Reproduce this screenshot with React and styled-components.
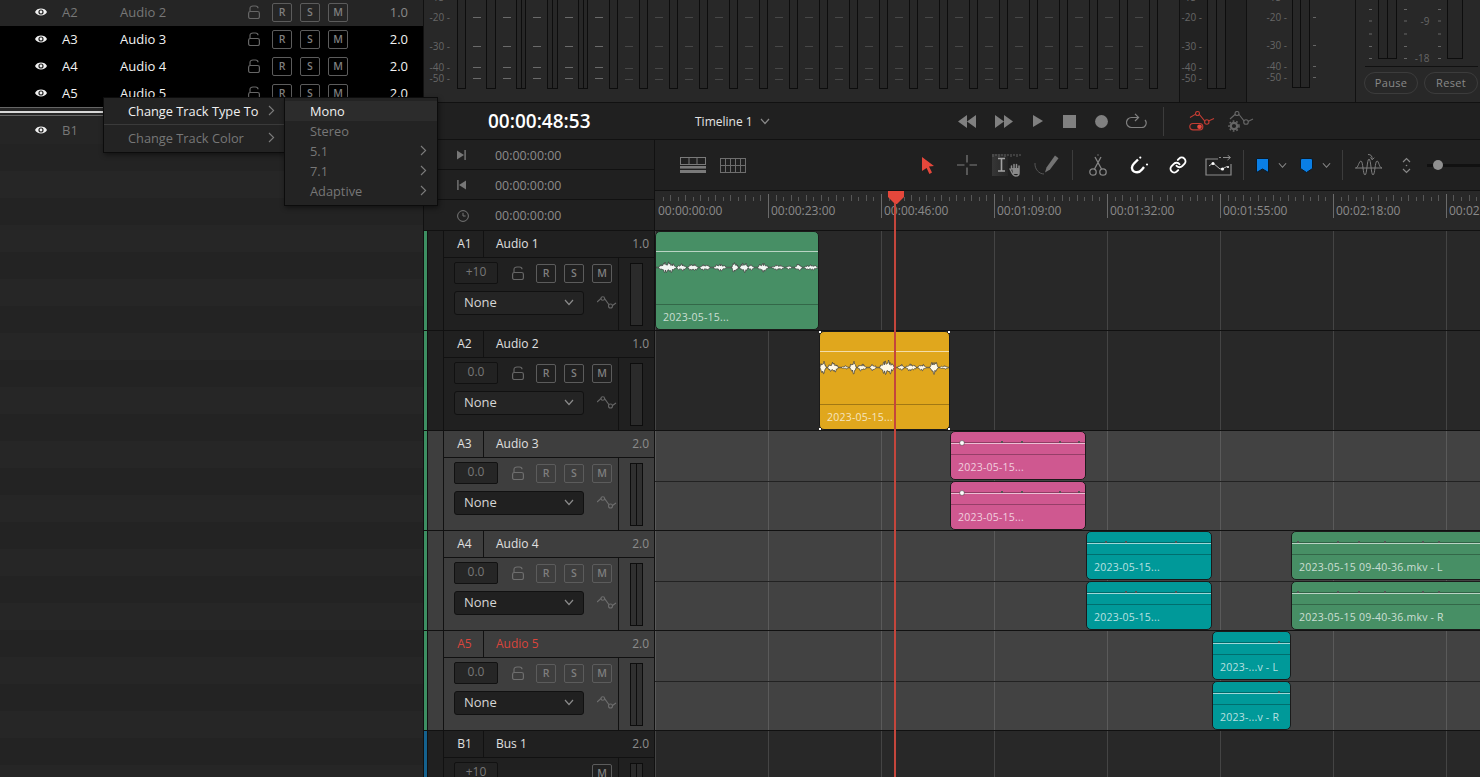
import React from "react";
import styled, { createGlobalStyle } from "styled-components";
import { Link } from "lucide-react";

const Global = createGlobalStyle`
  html, body { margin: 0; padding: 0; background: #222; }
  * { box-sizing: border-box; }
  body { font-family: "Open Sans", "Liberation Sans", sans-serif; }
`;

const Root = styled.div`
  position: relative; width: 1480px; height: 777px; overflow: hidden;
  display: flex; background: #222; color: #888;
  font-family: "Open Sans", "Liberation Sans", sans-serif;
`;

/* ---------- left track index ---------- */
const IndexPanel = styled.div`
  width: 424px; flex: none; height: 777px; overflow: hidden;
  border-right: 1px solid #111; background: #232323;
  display: flex; flex-direction: column;
`;
const IndexRow = styled.div`
  height: 27px; flex: none; display: flex; align-items: center; padding: 0 0 1px 35px;
  background: ${(p) => (p.$on ? "#000" : "#252525")};
  color: ${(p) => (p.$on ? "#f2f2f2" : "#777")};
  font-size: 13px;
  &:first-child { margin-top: -1px; }
`;
const IndexEye = styled.span`width: 27px; flex: none; display: flex;`;
const IndexId = styled.span`width: 58px; flex: none;`;
const IndexName = styled.span`width: 128px; flex: none;`;
const IndexVal = styled.span`width: 60px; text-align: right; color: ${(p) => (p.$on ? "#f2f2f2" : "#888")};`;
const LetterGroup = styled.span`display: flex; gap: 8px; margin-left: 12px;`;
const Divider = styled.div`
  height: 9px; flex: none; margin-bottom: 1px; background: #262626;
  border-top: 1px solid #666; border-bottom: 1px solid #666; display: flex; align-items: center;
  &::after { content: ""; display: block; width: 100%; height: 2px; background: #d8d8d8; }
`;
const EmptyRow = styled.div`
  height: 27px; flex: none; background: ${(p) => (p.$alt ? "#232323" : "#262626")};
`;

/* ---------- right column ---------- */
const Main = styled.div`flex: 1; min-width: 0; display: flex; flex-direction: column;`;

const Meters = styled.div`
  height: 103px; flex: none; display: flex; background: #282828; border-bottom: 1px solid #111; overflow: hidden;
`;
const MeterSection = styled.div`
  flex: none; display: flex; width: ${(p) => p.$w}px; height: 102px;
  background: ${(p) => p.$bg || "#282828"};
  border-right: ${(p) => (p.$last ? "none" : "1px solid #111")};
`;
const ScaleColumn = styled.div`
  flex: none; width: ${(p) => p.$w}px; margin-right: ${(p) => p.$mr}px;
  display: flex; flex-direction: column; align-items: flex-end;
`;
const ScaleLabel = styled.div`
  height: 10px; line-height: 10px; font-size: 10px; color: #666; white-space: pre; flex: none;
  margin-top: ${(p) => p.$gap}px;
`;
const Strip = styled.div`flex: none; width: ${(p) => p.$w}px; display: flex;`;
const Bar = styled.div`
  flex: none; width: ${(p) => p.$w}px; height: ${(p) => p.$h}px; background: #272727;
  border: 1px solid #0d0d0d; border-top: none; display: flex;
`;
const BarSplit = styled.div`flex: 1; & + & { border-left: 1px solid #0d0d0d; }`;
const Ticks = styled.svg`flex: none; display: block;`;

const LoudnessColumn = styled.div`flex: 1; display: flex; flex-direction: column;`;
const LoudnessRow = styled.div`
  height: 67px; margin-left: 9px; width: 113px; padding-left: 4px; flex: none;
  border-bottom: 1px solid #111; display: flex; overflow: hidden;
`;
const DotColumn = styled.svg`flex: none; display: block; margin-left: ${(p) => p.$ml}px;`;
const LoudLabels = styled.div`
  flex: none; width: 20px; margin-left: 3px; display: flex; flex-direction: column; align-items: flex-end;
`;
const BarSlot = styled.div`flex: none; margin-left: ${(p) => p.$ml}px;`;
const PillRow = styled.div`display: flex; gap: 6px; padding: 5px 0 0 8px;`;
const Pill = styled.div`
  width: 54px; height: 22px; border: 1px solid #3c3c3c; border-radius: 11px;
  font-size: 11px; line-height: 20px; text-align: center; color: #888; letter-spacing: .3px;
`;

/* transport */
const Transport = styled.div`
  height: 37px; flex: none; display: flex; align-items: center; padding-left: 64px;
  background: #202020; border-bottom: 1px solid #111;
`;
const MainTime = styled.div`
  width: 207px; flex: none; font-size: 19px; font-weight: 600; color: #fff;
`;
const TimelineName = styled.div`
  width: 263px; flex: none; display: flex; align-items: center; gap: 7px; font-size: 12px; color: #e4e4e4;
`;
const Slot = styled.div`
  flex: none; display: flex; align-items: center; margin-left: ${(p) => p.$ml || 0}px;
  & > svg { display: block; }
`;
const VSep = styled.div`
  flex: none; width: 1px; height: ${(p) => p.$h || 30}px; background: #3c3c3c; margin-left: ${(p) => p.$ml}px;
`;

/* header */
const TimelineHead = styled.div`height: 91px; flex: none; display: flex;`;
const CodeColumn = styled.div`
  width: 231px; flex: none; display: flex; flex-direction: column; background: #202020;
  border-right: 1px solid #111;
`;
const CodeRow = styled.div`
  height: 30px; flex: none; display: flex; align-items: center; padding: 1px 0 0 33px; border-bottom: 1px solid #111;
  font-size: 12.4px; color: #8c8c8c;
  &:last-child { height: 31px; }
`;
const CodeIcon = styled.span`width: 38px; flex: none; display: flex;`;
const HeadRight = styled.div`flex: 1; min-width: 0; display: flex; flex-direction: column;`;
const Toolbar = styled.div`
  height: 51px; flex: none; display: flex; align-items: center; background: #202020; border-bottom: 1px solid #111;
`;
const SliderTrack = styled.div`
  flex: 1; height: 3px; margin-left: 16px; background: #111; position: relative;
`;
const SliderKnob = styled.div`
  position: absolute; left: 6px; top: -4px; width: 10px; height: 10px; border-radius: 50%; background: #8f8f8f;
`;
const Ruler = styled.div`
  height: 40px; flex: none; position: relative; display: flex; overflow: hidden;
  background: #282828; border-bottom: 1px solid #111;
`;
const RulerTicks = styled.svg`position: absolute; left: 0; top: 0; display: block;`;
const RulerLabel = styled.div`
  flex: none; width: 113px; padding: 13px 0 0 3px; font-size: 12px; line-height: 14px; color: #8a8a8a; white-space: nowrap;
`;

/* tracks */
const Tracks = styled.div`flex: 1; display: flex; flex-direction: column; overflow: hidden;`;
const Track = styled.div`height: 100px; flex: none; display: flex; border-bottom: 1px solid #111;`;
const TrackHead = styled.div`
  width: 231px; flex: none; display: flex; border-right: 1px solid #111;
  background: ${(p) => (p.$on ? "#3e3e3e" : "#202020")};
`;
const Stripe = styled.div`width: 4px; flex: none; background: ${(p) => p.$c}; border-right: 1px solid #111;`;
const Gutter = styled.div`width: 16px; flex: none; border-right: 1px solid #111;`;
const TrackMain = styled.div`flex: 1; min-width: 0; display: flex; flex-direction: column;`;
const NameRow = styled.div`
  height: 27px; flex: none; display: flex; align-items: center; border-bottom: 1px solid #111; font-size: 12px;
  color: ${(p) => (p.$armed ? "#d9453c" : "#e0e0e0")};
`;
const TrackId = styled.div`
  width: 40px; flex: none; height: 100%; display: flex; align-items: center; justify-content: center;
  padding: 0 0 1px 2px; border-right: 1px solid #111;
`;
const TrackName = styled.div`flex: 1; padding: 0 0 1px 12px;`;
const TrackGain = styled.div`padding: 0 5px 1px 0; color: #8c8c8c;`;
const Body = styled.div`flex: 1; display: flex; min-height: 0;`;
const Controls = styled.div`
  width: 174px; flex: none; padding: 4px 0 0 10px; display: flex; flex-direction: column; gap: 7px;
`;
const ControlRow = styled.div`display: flex; align-items: center;`;
const GainBox = styled.div`
  width: 44px; height: 22px; flex: none; border: 1px solid #111; border-radius: 2px;
  background: ${(p) => (p.$on ? "#262626" : "#222")};
  font-size: 12px; line-height: 18px; text-align: center; color: #777;
`;
const LockSlot = styled.div`flex: none; margin-left: 14px; display: flex;`;
const Letters = styled.div`display: flex; gap: 8px; margin-left: ${(p) => p.$ml ?? 12}px;`;
const Letter = styled.div`
  width: 20px; height: 19px; flex: none; border: 1px solid #5c5c5c; border-radius: 2px;
  font-size: 10.5px; font-weight: 600; line-height: 17px; text-align: center; color: #7f7f7f;
`;
const Dropdown = styled.div`
  width: 130px; height: 24px; flex: none; display: flex; align-items: center; justify-content: space-between;
  padding: 0 9px 2px 9px; border: 1px solid #111; border-radius: 3px;
  background: ${(p) => (p.$on ? "#202020" : "#242424")};
  font-size: 13px; color: #d6d6d6;
`;
const AutoSlot = styled.div`flex: none; margin-left: 13px; display: flex;`;
const MeterCol = styled.div`
  flex: 1; border-left: 1px solid #111; padding: 5px 0 0 11px;
`;
const TrackMeter = styled.div`
  width: 13px; height: 63px; border: 1px solid #0d0d0d; background: ${(p) => (p.$on ? "#303030" : "#2b2b2b")}; display: flex;
`;

const Lane = styled.div`
  flex: 1; min-width: 0; position: relative;
  background-color: ${(p) => (p.$on ? "#424242" : "#282828")};
  background-image: linear-gradient(90deg, ${(p) => (p.$on ? "#5a5a5a" : "#444")} 0 1px, transparent 1px);
  background-size: 113px 100%;
`;
const LaneMid = styled.div`position: absolute; left: 0; right: 0; top: 50px; height: 1px; background: #222;`;
const Clip = styled.div`
  position: absolute; left: ${(p) => p.$x}px; width: ${(p) => p.$w}px; top: ${(p) => p.$y}px; height: ${(p) => p.$h}px;
  background: ${(p) => p.$c}; border: 1px solid #1b1b1b; border-radius: 5px;
  display: flex; flex-direction: column;
`;
const ClipTop = styled.div`
  flex: none; height: ${(p) => p.$h}px; border-bottom: 1px solid rgba(255,255,255,.62);
`;
const ClipWave = styled.div`flex: 1; min-height: 0;`;
const WaveSvg = styled.svg`display: block; position: absolute; left: 0; top: ${(p) => p.$y}px;`;
const ClipLabel = styled.div`
  flex: none; height: 25px; border-top: 1px solid rgba(0,0,0,.28); padding: 5px 0 0 7px;
  font-size: 10.5px; line-height: 14px; letter-spacing: .22px; color: rgba(255,255,255,.72); white-space: nowrap; overflow: hidden;
`;
const Handle = styled.span`
  position: absolute; width: 2px; height: 2px; background: #fff;
  ${(p) => (p.$r ? "right: -1px;" : "left: -1px;")}
  ${(p) => (p.$b ? "bottom: -1px;" : "top: -1px;")}
`;

/* playhead + menus */
const Playhead = styled.div`
  position: absolute; left: 894px; top: 203px; bottom: 0; width: 2px; background: #c4463c; z-index: 5;
`;
const PlayheadCap = styled.svg`position: absolute; left: 888px; top: 191px; z-index: 5; display: block;`;
const Menu = styled.div`
  position: absolute; left: ${(p) => p.$x}px; top: 97px; width: ${(p) => p.$w}px; height: ${(p) => p.$h}px;
  padding: 3px 0 0; background: #232323; border: 1px solid #0c0c0c; z-index: 10;
  box-shadow: 1px 2px 5px rgba(0,0,0,.45);
`;
const MenuItem = styled.div`
  height: 20px; display: flex; align-items: center; justify-content: space-between;
  padding: 0 ${(p) => p.$pr}px 1px ${(p) => p.$pl}px; font-size: 12.8px;
  color: ${(p) => (p.$lit ? "#f0f0f0" : "#777")};
  background: ${(p) => (p.$hi ? "#2c2c2c" : "transparent")};
  & > svg { flex: none; display: block; }
`;
const MenuSep = styled.div`height: 1px; background: #3a3a3a; margin: 3px 0 3px;`;

/* ---------- icons ---------- */
const Eye = () => (
  <svg width="12" height="10" viewBox="0 0 12 10">
    <path d="M0 5C2 .4 10 .4 12 5 10 9.6 2 9.6 0 5Z" fill="#f0f0f0" />
    <circle cx="6" cy="5" r="2.6" fill="#222" />
    <circle cx="6" cy="5" r="1.4" fill="#f0f0f0" />
  </svg>
);
const Lock = ({ c = "#666" }) => (
  <svg width="12" height="14" viewBox="0 0 12 14" fill="none" stroke={c} strokeWidth="1.2">
    <rect x=".6" y="6.5" width="10.8" height="7" rx="1.8" />
    <path d="M2 6.5V3.5C2 1.8 3.3 1 5 1H7.5C9.2 1 10 1.8 10 3.2" />
  </svg>
);
const Auto = ({ c = "#666" }) => (
  <svg width="20" height="15" viewBox="0 0 20 15" fill="none" stroke={c} strokeWidth="1.1">
    <path d="M0 6L4 2.5M7.6 2.6L12 8.7M15.5 9.5L19 7" />
    <circle cx="5.8" cy="2.5" r="1.8" />
    <circle cx="13.5" cy="10" r="2" />
  </svg>
);
const ChevronDown = ({ c = "#8a8a8a", w = 10 }) => (
  <svg width={w} height="7" viewBox="0 0 10 7" fill="none" stroke={c} strokeWidth="1.2">
    <path d="M1 1l4 4.5L9 1" />
  </svg>
);
const ChevronRight = () => (
  <svg width="7" height="11" viewBox="0 0 7 11" fill="none" stroke="#7c7c7c" strokeWidth="1.1">
    <path d="M1 1l4.6 4.5L1 10" />
  </svg>
);
const GoEnd = () => (
  <svg width="9" height="10" viewBox="0 0 9 10" fill="#777"><path d="M0 .5L7 5 0 9.5Z" /><rect x="7.4" y="0" width="1.4" height="10" /></svg>
);
const GoStart = () => (
  <svg width="9" height="10" viewBox="0 0 9 10" fill="#777"><path d="M9 .5L2 5l7 4.5Z" /><rect x=".2" y="0" width="1.4" height="10" /></svg>
);
const Clock = () => (
  <svg width="12" height="12" viewBox="0 0 12 12" fill="none" stroke="#777" strokeWidth="1"><circle cx="6" cy="6" r="5.4" /><path d="M6 2.8V6h2.6" /></svg>
);
const Rewind = () => (<svg width="18" height="13" viewBox="0 0 18 13" fill="#808080"><path d="M0 6.5L9 0v13ZM9 6.5L18 0v13Z" /></svg>);
const Forward = () => (<svg width="18" height="13" viewBox="0 0 18 13" fill="#808080"><path d="M18 6.5L9 0v13ZM9 6.5L0 0v13Z" /></svg>);
const Play = () => (<svg width="10" height="12" viewBox="0 0 10 12" fill="#808080"><path d="M0 0l10 6-10 6Z" /></svg>);
const Stop = () => (<svg width="13" height="13"><rect width="13" height="13" fill="#808080" /></svg>);
const Rec = () => (<svg width="13" height="13"><circle cx="6.5" cy="6.5" r="6.4" fill="#808080" /></svg>);
const Loop = () => (
  <svg width="21" height="16" viewBox="0 0 21 16" fill="none" stroke="#808080" strokeWidth="1.2">
    <path d="M12 4.5H5.5A4.5 4.5 0 0 0 5.5 14.5h10A4.5 4.5 0 0 0 19 7" />
    <path d="M9 .8l3.6 3.7L9 8" />
  </svg>
);
const AutoToggle = () => (
  <svg width="26" height="20" viewBox="0 0 26 20" fill="none" stroke="#c13c33" strokeWidth="1.1">
    <path d="M1 6.5l6-3.6M10 3l6 7.4M19.5 10L25 7.5" />
    <circle cx="8.5" cy="2.5" r="2" /><circle cx="17.8" cy="11" r="2.2" />
    <rect x=".8" y="12.5" width="13" height="6.4" rx="3.2" strokeWidth="1.2" />
    <circle cx="10.5" cy="15.7" r="2.3" fill="#e8483d" stroke="none" />
  </svg>
);
const AutoGear = () => (
  <svg width="26" height="21" viewBox="0 0 26 21" fill="none" stroke="#666" strokeWidth="1.1">
    <path d="M2 8l5.6-5M10.6 3l5.6 7.2M20 10.5L25 8" />
    <circle cx="9" cy="2.5" r="2" /><circle cx="18" cy="11" r="2.3" />
    <circle cx="6" cy="15" r="3.2" strokeWidth="2.2" />
    <circle cx="6" cy="15" r="5" strokeWidth="1.6" strokeDasharray="1.7 1.9" />
  </svg>
);
const ViewStack = () => (
  <svg width="26" height="16" viewBox="0 0 26 16" fill="none" stroke="#7a7a7a">
    <rect x=".5" y=".5" width="25" height="7" /><path d="M9 .5v7M17 .5v7" />
    <rect x="0" y="9" width="26" height="2.6" fill="#7a7a7a" stroke="none" />
    <rect x="0" y="13" width="26" height="3" fill="#7a7a7a" stroke="none" />
  </svg>
);
const ViewGrid = () => (
  <svg width="26" height="15" viewBox="0 0 26 15" fill="none" stroke="#6e6e6e">
    <rect x=".5" y=".5" width="25" height="14" /><path d="M5.5 .5v14M10.5 .5v14M15.5 .5v14M20.5 .5v14M.5 7.5h25" />
  </svg>
);
const Arrow = () => (
  <svg width="12" height="17" viewBox="0 0 12 17"><path d="M0 0l12 9-5 .6 3 6-2.6 1.4-2.8-6L0 14Z" fill="#e5473b" /></svg>
);
const Cross = () => (
  <svg width="20" height="20" viewBox="0 0 20 20" stroke="#7e7e7e" strokeWidth="1.2"><path d="M10 0v7.5M10 12.5V20M0 10h7.5M12.5 10H20" /></svg>
);
const Trim = () => (
  <svg width="30" height="23" viewBox="0 0 30 23" fill="none">
    <defs>
      <linearGradient id="trimFade" x1="0" x2="1" y1="0" y2="0">
        <stop offset="0" stopColor="#363636" />
        <stop offset="1" stopColor="#262626" />
      </linearGradient>
    </defs>
    <rect x="0" y="0" width="16" height="22" fill="url(#trimFade)" />
    <path d="M1 0v3M4 0v2M7 0v3M10 0v2M13 0v3M16 0v2M19 0v3M22 0v2M25 0v3M28 0v2" stroke="#5f5f5f" />
    <path d="M6 4.5h7M6 17h7M9.5 4.5V17" stroke="#a2a2a2" strokeWidth="1.6" />
    <path d="M18 15l2 4c1 2 2 3 4 3s3-1 3-3v-6.5M19.5 15v-3M22 14v-3.6M24.5 14v-3.4M27 15v-3" stroke="#8a8a8a" strokeWidth="1.5" strokeLinecap="round" />
    <path d="M20 14h7v6h-6Z" fill="#8a8a8a" />
  </svg>
);
const Pencil = () => (
  <svg width="25" height="23" viewBox="0 0 25 23" fill="none">
    <path d="M11 18.5l1.5-5L21 1.5l3.5 2.7L16 15.5Z" fill="#737373" />
    <path d="M1 9c-.5 6 4 11 9 11" stroke="#555" strokeWidth="1" />
  </svg>
);
const Scissors = () => (
  <svg width="18" height="22" viewBox="0 0 18 22" fill="none" stroke="#858585" strokeWidth="1.3">
    <circle cx="4" cy="18" r="3.2" /><circle cx="14" cy="18" r="3.2" />
    <path d="M5.5 15L12 3M12.5 15L6 3" />
    <path d="M9 0v2" stroke="#555" />
  </svg>
);
const Magnet = () => (
  <svg width="19" height="18" viewBox="0 0 19 18" fill="none" stroke="#fff" strokeWidth="2.4">
    <path d="M8 3.5L4 7.5C1 10.5 1.5 14 4 15.5 7 17 10 16 12 13.5L14 11" />
    <circle cx="10.3" cy="1.6" r="1.1" fill="#fff" stroke="none" /><circle cx="17" cy="8.5" r="1.1" fill="#fff" stroke="none" />
  </svg>
);
const FlagBox = () => (
  <svg width="27" height="21" viewBox="0 0 27 21" fill="none">
    <path d="M13 4H1v16h25V9" stroke="#8c8c8c" strokeWidth="1.2" />
    <path d="M14 2.5h2M18 2.5h7M22.5 0l3 2.5-3 2.5" stroke="#8c8c8c" strokeWidth="1" />
    <path d="M4 11l4-3 7 6 3-.5 4-2" stroke="#bbb" strokeWidth="1" />
    <circle cx="8" cy="8.5" r="1.5" fill="#fff" /><circle cx="17.5" cy="14" r="1.6" fill="#fff" /><circle cx="23" cy="12" r="1" fill="#fff" />
  </svg>
);
const Flag = () => (
  <svg width="13" height="15" viewBox="0 0 13 15"><path d="M.5.5h12v14L6.5 11 .5 14.5Z" fill="#0a7fe6" stroke="#0c1a26" /></svg>
);
const Marker = () => (
  <svg width="13" height="15" viewBox="0 0 13 15"><path d="M2 .5h9a1.5 1.5 0 0 1 1.5 1.5v8.5L6.5 14.5.5 10.5V2A1.5 1.5 0 0 1 2 .5Z" fill="#0a7fe6" stroke="#0c1a26" /></svg>
);
const WaveTool = () => (
  <svg width="27" height="22" viewBox="0 0 27 22" fill="none" stroke="#7e7e7e" strokeWidth="1">
    <path d="M0 14h27" />
    <path d="M1 14C3 14 4 7 6 7S8 21 10 21 12 5 14 5 16 21 18 21 20 7 22 7 24 14 27 14" />
    <path d="M13 .5c3 0 4.5 1.5 4 5M15.5 3.500l1.800 2.200 2-2" />
  </svg>
);
const UpDown = () => (
  <svg width="9" height="17" viewBox="0 0 9 17" fill="none" stroke="#888" strokeWidth="1.2">
    <path d="M1 5l3.5-3.5L8 5M1 12l3.5 3.5L8 12" /><circle cx="4.5" cy="8.5" r=".8" fill="#888" stroke="none" />
  </svg>
);

/* ---------- data ---------- */
const BAR_STARTS = [456.5, 486.3, 516, 547.3, 578, 609, 639, 669, 699, 729, 759, 789, 819, 849, 879, 909, 939, 969, 999, 1029, 1059, 1089, 1119, 1149];

const Channel = ({ i }) => {
  const next = BAR_STARTS[i + 1];
  const double = i >= 2 && i <= 4;
  const bw = double ? 10.5 : 9.5;
  const bright = i < 5;
  const ys = bright ? [17.5, 46.5, 67.5, 78.5] : [17.5, 46.5, 68.5, 79.5];
  return (
    <Strip $w={next ? next - BAR_STARTS[i] : 12}>
      <Bar $w={bw} $h={89}>
        {double ? (<><BarSplit /><BarSplit /></>) : null}
      </Bar>
      {next ? (
        <Ticks width="16" height="89" viewBox="0 0 16 89" stroke={bright ? "#6a6a6a" : "#474747"}>
          {ys.map((y) => (<line key={y} x1="7" x2="15" y1={y} y2={y} />))}
        </Ticks>
      ) : null}
    </Strip>
  );
};
const DbScale = ({ w, mr, gaps = [10, 19, 11, 1] }) => (
  <ScaleColumn $w={w} $mr={mr}>
    <ScaleLabel $gap={-8}>-15 -</ScaleLabel>
    <ScaleLabel $gap={gaps[0]}>-20 -</ScaleLabel>
    <ScaleLabel $gap={gaps[1]}>-30 -</ScaleLabel>
    <ScaleLabel $gap={gaps[2]}>-40 -</ScaleLabel>
    <ScaleLabel $gap={gaps[3]}>-50 -</ScaleLabel>
  </ScaleColumn>
);
const Dots = ({ ml }) => (
  <DotColumn $ml={ml} width="3" height="60" viewBox="0 0 3 60" stroke="#666">
    {[9.5, 21, 34, 46.5, 58.5].map((y) => (<line key={y} x1="0" x2="3" y1={y} y2={y} />))}
  </DotColumn>
);

const blob = (x0, x1, a) => ({ x0, x1, a });
const wavePath = (blobs, w, cy) => {
  const top = [], bot = [];
  for (let x = 0; x <= w; x += 0.5) {
    let up = 0.25, dn = 0.25;
    blobs.forEach((b) => {
      if (x >= b.x0 && x <= b.x1) {
        const t = (x - b.x0) / (b.x1 - b.x0);
        const env = b.a * Math.pow(Math.sin(Math.PI * t), 0.55);
        const u = env * (0.35 + 0.65 * Math.abs(Math.sin(x * 1.9) * Math.cos(x * 0.73)));
        const d = env * (0.35 + 0.65 * Math.abs(Math.cos(x * 1.37 + 1) * Math.sin(x * 0.51)));
        if (u > up) up = u;
        if (d > dn) dn = d;
      }
    });
    top.push(`${x} ${(cy - up).toFixed(2)}`);
    bot.unshift(`${x} ${(cy + dn).toFixed(2)}`);
  }
  return `M${top.join("L")}L${bot.join("L")}Z`;
};
const WAVE_A1 = [blob(3, 20, 6), blob(21, 30, 4), blob(32, 42, 4), blob(44, 54, 3.5), blob(58, 70, 4), blob(76, 82, 6), blob(84, 92, 5.5), blob(92, 98, 3), blob(102, 112, 5), blob(116, 128, 3), blob(130, 136, 2), blob(139, 146, 4), blob(148, 162, 3)];
const WAVE_A2 = [blob(0, 6, 7), blob(8, 18, 5.5), blob(22, 28, 2), blob(30, 36, 7), blob(38, 46, 4), blob(50, 56, 3.5), blob(60, 74, 8), blob(78, 84, 3.5), blob(86, 96, 4), blob(98, 106, 3.5), blob(110, 118, 7), blob(120, 128, 2)];

const Wave = ({ blobs, w, fill }) => (
  <WaveSvg $y={27} width={w} height="18" viewBox={`0 0 ${w} 18`}>
    <path d={wavePath(blobs, w, 8.5)} fill={fill} stroke="#3a3a3a" strokeWidth=".7" />
  </WaveSvg>
);
const Specks = ({ w, xs, big }) => (
  <WaveSvg $y={7} width={w} height="8" viewBox={`0 0 ${w} 8`}>
    <line x1="0" x2={w} y1="3.5" y2="3.5" stroke="rgba(0,0,0,.3)" />
    {xs.map((x) => (<rect key={x} x={x} y="2" width="2" height="2" fill="#555" />))}
    {big ? <circle cx={big} cy="4" r="2.4" fill="#fff" stroke="#333" strokeWidth=".5" /> : null}
  </WaveSvg>
);

const MonoClip = ({ x, w, color, label, blobs, fill, selected }) => (
  <Clip $x={x} $w={w} $y={0} $h={99} $c={color}>
    <ClipTop $h={20} />
    <ClipWave />
    <Wave blobs={blobs} w={w - 2} fill={fill} />
    <ClipLabel>{label}</ClipLabel>
    {selected ? (<><Handle /><Handle $r /><Handle $b /><Handle $r $b /></>) : null}
  </Clip>
);
const StereoClip = ({ x, w, y, color, label, xs, big }) => (
  <Clip $x={x} $w={w} $y={y} $h={49} $c={color}>
    <ClipTop $h={12} />
    <ClipWave />
    <Specks w={w - 2} xs={xs} big={big} />
    <ClipLabel>{label}</ClipLabel>
  </Clip>
);

const TRACKS = [
  { id: "A1", name: "Audio 1", gain: "1.0", vol: "+10", color: "#3d8f62" },
  { id: "A2", name: "Audio 2", gain: "1.0", vol: "0.0", color: "#3d8f62" },
  { id: "A3", name: "Audio 3", gain: "2.0", vol: "0.0", color: "#3d8f62", on: true, stereo: true },
  { id: "A4", name: "Audio 4", gain: "2.0", vol: "0.0", color: "#3d8f62", on: true, stereo: true },
  { id: "A5", name: "Audio 5", gain: "2.0", vol: "0.0", color: "#3d8f62", on: true, stereo: true, armed: true },
  { id: "B1", name: "Bus 1", gain: "2.0", vol: "+10", color: "#14618e", bus: true, stereo: true },
];

const PINK = "#cf5890", TEAL = "#009999", GREEN = "#478f65", YELLOW = "#e0a71d";

const LANE = {
  A1: <MonoClip x={0} w={164} color={GREEN} label="2023-05-15..." blobs={WAVE_A1} fill="#f2f7f3" />,
  A2: <MonoClip x={164} w={131} color={YELLOW} label="2023-05-15..." blobs={WAVE_A2} fill="#fff9e6" selected />,
  A3: (
    <>
      <StereoClip x={295} w={136} y={0} color={PINK} label="2023-05-15..." xs={[50, 70, 108, 127]} big={11} />
      <StereoClip x={295} w={136} y={50} color={PINK} label="2023-05-15..." xs={[50, 70, 108, 127]} big={11} />
    </>
  ),
  A4: (
    <>
      <StereoClip x={431} w={126} y={0} color={TEAL} label="2023-05-15..." xs={[18, 38, 88]} />
      <StereoClip x={431} w={126} y={50} color={TEAL} label="2023-05-15..." xs={[38, 48, 88]} />
      <StereoClip x={636} w={202} y={0} color={GREEN} label="2023-05-15 09-40-36.mkv - L" xs={[5, 45, 66, 92, 130, 146]} />
      <StereoClip x={636} w={202} y={50} color={GREEN} label="2023-05-15 09-40-36.mkv - R" xs={[5, 45, 66, 92, 130, 146]} />
    </>
  ),
  A5: (
    <>
      <StereoClip x={557} w={79} y={0} color={TEAL} label="2023-...v - L" xs={[65]} />
      <StereoClip x={557} w={79} y={50} color={TEAL} label="2023-...v - R" xs={[65]} />
    </>
  ),
};

const INDEX_ROWS = [
  { id: "A2", name: "Audio 2", val: "1.0" },
  { id: "A3", name: "Audio 3", val: "2.0", on: true },
  { id: "A4", name: "Audio 4", val: "2.0", on: true },
  { id: "A5", name: "Audio 5", val: "2.0", on: true },
];

const RULER = ["00:00:00:00", "00:00:23:00", "00:00:46:00", "00:01:09:00", "00:01:32:00", "00:01:55:00", "00:02:18:00", "00:02:41:00"];

const RulerDrawing = () => {
  const lines = [];
  for (let i = 0; i < 110; i++) {
    const x = Math.round(i * 7.533) + 0.5;
    if (i % 15 === 0) {
      if (i > 0) lines.push(<line key={i} x1={x} x2={x} y1="3" y2="27" stroke="#6a6a6a" />);
    } else {
      lines.push(<line key={i} x1={x} x2={x} y1={i % 2 ? 6 : 4} y2="10" stroke="#575757" />);
    }
  }
  return <RulerTicks width="825" height="40" viewBox="0 0 825 40">{lines}</RulerTicks>;
};

const TrackRow = ({ t }) => (
  <Track>
    <TrackHead $on={t.on}>
      <Stripe $c={t.color} />
      <Gutter />
      <TrackMain>
        <NameRow $armed={t.armed}>
          <TrackId>{t.id}</TrackId>
          <TrackName>{t.name}</TrackName>
          <TrackGain>{t.gain}</TrackGain>
        </NameRow>
        <Body>
          <Controls>
            <ControlRow>
              <GainBox $on={t.on}>{t.vol}</GainBox>
              {t.bus ? (
                <Letters $ml={94}><Letter>M</Letter></Letters>
              ) : (
                <>
                  <LockSlot><Lock c={t.on ? "#6e6e6e" : "#666"} /></LockSlot>
                  <Letters><Letter>R</Letter><Letter>S</Letter><Letter>M</Letter></Letters>
                </>
              )}
            </ControlRow>
            <ControlRow>
              <Dropdown $on={t.on}>None<ChevronDown /></Dropdown>
              <AutoSlot><Auto c={t.on ? "#6e6e6e" : "#666"} /></AutoSlot>
            </ControlRow>
          </Controls>
          <MeterCol>
            <TrackMeter $on={t.on}>
              {t.stereo ? (<><BarSplit /><BarSplit /></>) : null}
            </TrackMeter>
          </MeterCol>
        </Body>
      </TrackMain>
    </TrackHead>
    <Lane $on={t.on}>
      {t.stereo && !t.bus ? <LaneMid /> : null}
      {LANE[t.id]}
    </Lane>
  </Track>
);

export default function App() {
  return (
    <Root>
      <Global />
      <IndexPanel>
        {INDEX_ROWS.map((r) => (
          <IndexRow key={r.id} $on={r.on}>
            <IndexEye><Eye /></IndexEye>
            <IndexId>{r.id}</IndexId>
            <IndexName>{r.name}</IndexName>
            <Lock />
            <LetterGroup><Letter>R</Letter><Letter>S</Letter><Letter>M</Letter></LetterGroup>
            <IndexVal $on={r.on}>{r.val}</IndexVal>
          </IndexRow>
        ))}
        <Divider />
        <IndexRow>
          <IndexEye><Eye /></IndexEye>
          <IndexId>B1</IndexId>
        </IndexRow>
        {Array.from({ length: 24 }, (_, i) => (<EmptyRow key={i} $alt={i % 2 === 0} />))}
      </IndexPanel>

      <Main>
        <Meters>
          <MeterSection $w={756}>
            <DbScale w={26} mr={6.5} />
            {BAR_STARTS.map((_, i) => (<Channel key={i} i={i} />))}
          </MeterSection>
          <MeterSection $w={67} $bg="#222">
            <DbScale w={22} mr={5} />
            <Bar $w={18.5} $h={89}><BarSplit /><BarSplit /></Bar>
          </MeterSection>
          <MeterSection $w={109}>
            <DbScale w={40} mr={4.5} gaps={[10, 18, 11, 1]} />
            <Bar $w={18.5} $h={88}><BarSplit /><BarSplit /></Bar>
            <Ticks width="8" height="88" viewBox="0 0 8 88" stroke="#666">
              {[17.5, 45.5, 66.5, 77.5].map((y) => (<line key={y} x1="3" x2="6" y1={y} y2={y} />))}
            </Ticks>
          </MeterSection>
          <MeterSection $w={124} $last>
            <LoudnessColumn>
              <LoudnessRow>
                <Dots ml={0} />
                <BarSlot $ml={6}><Bar $w={18.5} $h={59}><BarSplit /><BarSplit /></Bar></BarSlot>
                <Dots ml={7} />
                <LoudLabels>
                  <ScaleLabel $gap={16}>-9</ScaleLabel>
                  <ScaleLabel $gap={27}>-18</ScaleLabel>
                </LoudLabels>
                <Dots ml={8} />
                <BarSlot $ml={6}><Bar $w={16.5} $h={59} /></BarSlot>
              </LoudnessRow>
              <PillRow>
                <Pill>Pause</Pill>
                <Pill>Reset</Pill>
              </PillRow>
            </LoudnessColumn>
          </MeterSection>
        </Meters>

        <Transport>
          <MainTime>00:00:48:53</MainTime>
          <TimelineName>Timeline 1<ChevronDown /></TimelineName>
          <Slot><Rewind /></Slot>
          <Slot $ml={19}><Forward /></Slot>
          <Slot $ml={20}><Play /></Slot>
          <Slot $ml={20}><Stop /></Slot>
          <Slot $ml={19}><Rec /></Slot>
          <Slot $ml={18}><Loop /></Slot>
          <VSep $ml={16} $h={29} />
          <Slot $ml={25}><AutoToggle /></Slot>
          <Slot $ml={13}><AutoGear /></Slot>
        </Transport>

        <TimelineHead>
          <CodeColumn>
            <CodeRow><CodeIcon><GoEnd /></CodeIcon>00:00:00:00</CodeRow>
            <CodeRow><CodeIcon><GoStart /></CodeIcon>00:00:00:00</CodeRow>
            <CodeRow><CodeIcon><Clock /></CodeIcon>00:00:00:00</CodeRow>
          </CodeColumn>
          <HeadRight>
            <Toolbar>
              <Slot $ml={25}><ViewStack /></Slot>
              <Slot $ml={14}><ViewGrid /></Slot>
              <Slot $ml={176}><Arrow /></Slot>
              <Slot $ml={23}><Cross /></Slot>
              <Slot $ml={15}><Trim /></Slot>
              <Slot $ml={12}><Pencil /></Slot>
              <VSep $ml={13} />
              <Slot $ml={16}><Scissors /></Slot>
              <Slot $ml={23}><Magnet /></Slot>
              <Slot $ml={20}><Link size={18} color="#fff" strokeWidth={2.6} /></Slot>
              <Slot $ml={18}><FlagBox /></Slot>
              <VSep $ml={11} />
              <Slot $ml={12}><Flag /></Slot>
              <Slot $ml={9}><ChevronDown w={9} /></Slot>
              <Slot $ml={13}><Marker /></Slot>
              <Slot $ml={9}><ChevronDown w={9} /></Slot>
              <VSep $ml={11} />
              <Slot $ml={12}><WaveTool /></Slot>
              <Slot $ml={20}><UpDown /></Slot>
              <SliderTrack><SliderKnob /></SliderTrack>
            </Toolbar>
            <Ruler>
              {RULER.map((r) => (<RulerLabel key={r}>{r}</RulerLabel>))}
              <RulerDrawing />
            </Ruler>
          </HeadRight>
        </TimelineHead>

        <Tracks>
          {TRACKS.map((t) => (<TrackRow key={t.id} t={t} />))}
        </Tracks>
      </Main>

      <PlayheadCap width="16" height="13" viewBox="0 0 16 13">
        <path d="M0 0h16v6l-7 7H7L0 6Z" fill="#e5473b" />
      </PlayheadCap>
      <Playhead />

      <Menu $x={103} $w={182} $h={56}>
        <MenuItem $lit $pl={24} $pr={9}>Change Track Type To<ChevronRight /></MenuItem>
        <MenuSep />
        <MenuItem $pl={24} $pr={9}>Change Track Color<ChevronRight /></MenuItem>
      </Menu>
      <Menu $x={284} $w={154} $h={109}>
        <MenuItem $lit $hi $pl={25} $pr={10}>Mono</MenuItem>
        <MenuItem $pl={25} $pr={10}>Stereo</MenuItem>
        <MenuItem $pl={25} $pr={10}>5.1<ChevronRight /></MenuItem>
        <MenuItem $pl={25} $pr={10}>7.1<ChevronRight /></MenuItem>
        <MenuItem $pl={25} $pr={10}>Adaptive<ChevronRight /></MenuItem>
      </Menu>
    </Root>
  );
}
